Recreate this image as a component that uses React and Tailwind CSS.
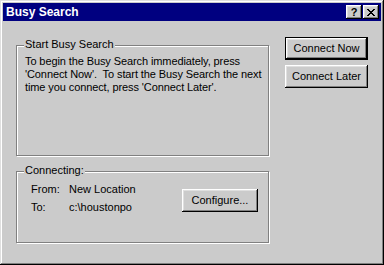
const raised =
  "shadow-[inset_-1px_-1px_0_#000,inset_1px_1px_0_#fff,inset_-2px_-2px_0_#808080,inset_2px_2px_0_#dfdfdf]";

export default function App() {
  return (
    <div
      className="w-[384px] h-[265px] bg-[#cbcbcb] p-[3px] flex flex-col text-[11px] text-black shadow-[inset_-1px_-1px_0_#000,inset_1px_1px_0_#dfdfdf,inset_-2px_-2px_0_#808080,inset_2px_2px_0_#fff]"
      style={{ fontFamily: '"Liberation Sans", Arial, sans-serif' }}
    >
      {/* title bar */}
      <div className="h-[18px] bg-[#000080] flex items-center pl-[3px] pr-[2px]">
        <span className="text-white font-bold text-[12px] leading-none">Busy Search</span>
        <div className="ml-auto flex gap-[1px]">
          <TitleButton>
            <span className="font-bold text-[11px] leading-none">?</span>
          </TitleButton>
          <TitleButton>
            <svg width="8" height="7" viewBox="0 0 8 7" shapeRendering="crispEdges">
              <path
                d="M0 0h2v1h1v1h2V1h1V0h2v1H7v1H6v1H5v1h1v1h1v1h1v1H6V6H5V5H3v1H2v1H0V6h1V5h1V4h1V3H2V2H1V1H0z"
                fill="#000"
              />
            </svg>
          </TitleButton>
        </div>
      </div>

      {/* body */}
      <div className="flex pt-[16px] pl-[13px]">
        <div className="w-[254px] mt-[8px] flex flex-col">
          <GroupBox title="Start Busy Search" className="h-[111px]">
            <p className="pl-[8px] pt-[9px] leading-[13px] whitespace-nowrap tracking-[-0.1px]">
              To begin the Busy Search immediately, press
              <br />
              'Connect Now'.&nbsp; To start the Busy Search the next
              <br />
              time you connect, press 'Connect Later'.
            </p>
          </GroupBox>
          <GroupBox title="Connecting:" className="h-[72px] mt-[15px]">
            <div className="flex items-start">
              <div className="pl-[14px] pt-[8px] leading-[18px]">
                <div className="flex">
                  <span className="w-[38px]">From:</span>
                  <span>New Location</span>
                </div>
                <div className="flex">
                  <span className="w-[38px]">To:</span>
                  <span>c:\houstonpo</span>
                </div>
              </div>
              <button
                className={`ml-auto mr-[10px] mt-[17px] w-[76px] h-[23px] bg-[#cbcbcb] ${raised}`}
              >
                Configure...
              </button>
            </div>
          </GroupBox>
        </div>

        <div className="ml-[15px] flex flex-col gap-[5px]">
          <button className={`w-[83px] h-[23px] bg-[#cbcbcb] border border-black ${raised}`}>
            Connect Now
          </button>
          <button className={`w-[83px] h-[23px] bg-[#cbcbcb] ${raised}`}>Connect Later</button>
        </div>
      </div>
    </div>
  );
}

function TitleButton({ children }) {
  return (
    <div className={`w-[16px] h-[14px] bg-[#cbcbcb] flex items-center justify-center ${raised}`}>
      {children}
    </div>
  );
}

function GroupBox({ title, className, children }) {
  return (
    <div
      className={`relative w-[253px] border border-[#808080] shadow-[inset_1px_1px_0_#fff,1px_1px_0_#fff] ${className}`}
    >
      <span className="absolute left-[7px] top-[-8px] px-[1px] bg-[#cbcbcb] leading-[13px]">
        {title}
      </span>
      {children}
    </div>
  );
}
